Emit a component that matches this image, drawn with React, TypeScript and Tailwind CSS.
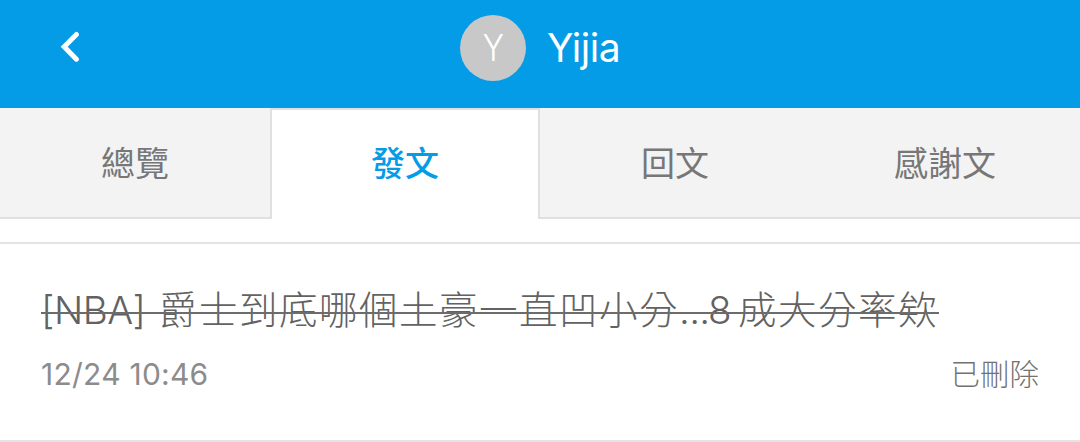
import clsx from "clsx"

const tabs = [
  { id: "overview", label: "總覽" },
  { id: "posts", label: "發文" },
  { id: "replies", label: "回文" },
  { id: "thanks", label: "感謝文" },
]

const post = {
  tag: "[NBA]",
  title: "爵士到底哪個土豪一直凹小分",
  dots: "...",
  count: "8",
  rest: "成大分率欸",
  time: "12/24 10:46",
  status: "已刪除",
}

function Header() {
  return (
    <header className="relative flex h-[108px] items-start justify-center bg-[#049be7] pt-[15px]">
      <button aria-label="back" className="absolute left-[60px] top-[31px]">
        <svg width="20" height="32" viewBox="0 0 20 32" fill="none" stroke="white" strokeWidth="5" strokeLinecap="round">
          <path d="M16.4 3.4L4.2 15.7l12.2 12.5" strokeLinejoin="miter" />
        </svg>
      </button>
      <div className="flex items-center gap-[21px]">
        <div className="flex size-[66px] items-center justify-center rounded-full bg-[#c8c8c8] text-[37px] font-light text-white">
          <span className="scale-x-[0.86]">Y</span>
        </div>
        <span className="text-[39px] leading-[66px] tracking-[-0.5px] text-white">Yijia</span>
      </div>
    </header>
  )
}

function TabBar({ active }: { active: string }) {
  return (
    <nav className="grid h-[111px] grid-cols-4 grid-rows-[111px]">
      {tabs.map((tab) => (
        <button
          key={tab.id}
          className={clsx(
            "flex items-start justify-center text-[34px]",
            tab.id === active
              ? "border-x-2 border-t-2 border-[#e0e0e0] bg-white font-medium leading-[108px] text-[#049be7]"
              : "border-b-2 border-[#e0e0e0] bg-[#f3f3f3] leading-[111px] text-[#777777]"
          )}
        >
          {tab.label}
        </button>
      ))}
    </nav>
  )
}

function PostRow() {
  return (
    <article className="mt-[23px] flex h-[200px] flex-col border-y-2 border-[#e4e4e4] px-[41px] pt-9">
      <h2 className="relative flex h-[60px] w-[898px] items-center whitespace-nowrap text-[38.5px] font-light leading-[60px] text-[#626262] after:absolute after:inset-x-0 after:top-8 after:h-[2px] after:bg-[#6c6c6c]">
        <span className="w-[118px] tracking-[-0.5px]">{post.tag}</span>
        <span className="w-[520px] tracking-[1.5px]">{post.title}</span>
        <span className="w-[29px] tracking-[-0.7px]">{post.dots}</span>
        <span className="w-[30px]">{post.count}</span>
        <span className="tracking-[1.5px]">{post.rest}</span>
      </h2>
      <div className="flex h-[69px] items-center justify-between text-[30px] text-[#8c8c8c]">
        <time className="tracking-[0.25px]">{post.time}</time>
        <span className="text-[29.5px] font-light text-[#727272]">{post.status}</span>
      </div>
    </article>
  )
}

export default function App() {
  return (
    <div className="h-[442px] w-[1080px] overflow-hidden bg-white font-['Inter','Noto_Sans_CJK_TC',sans-serif]">
      <Header />
      <TabBar active="posts" />
      <PostRow />
    </div>
  )
}
